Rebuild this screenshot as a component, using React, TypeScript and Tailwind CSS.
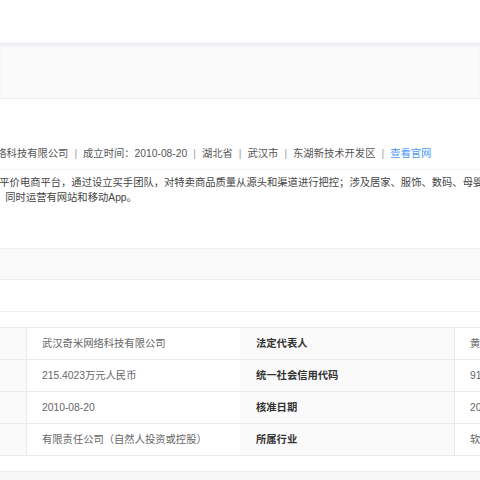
export default function App() {
  const rows = [
    ['武汉奇米网络科技有限公司', '法定代表人', '黄'],
    ['215.4023万元人民币', '统一社会信用代码', '91'],
    ['2010-08-20', '核准日期', '20'],
    ['有限责任公司（自然人投资或控股）', '所属行业', '软'],
  ];

  const font = { fontFamily: '"Liberation Sans", "Noto Sans CJK SC", sans-serif' };

  return (
    <div className="w-[480px] h-[480px] overflow-hidden bg-white flex flex-col text-[10.3px]" style={font}>
      {/* top bar */}
      <div className="h-[43px] shrink-0" />
      <div className="h-[56px] shrink-0 bg-[#fafafa] border-t border-[#ebebf1] border-b border-b-[#ececec] shadow-[inset_0_2px_3px_rgba(230,230,240,0.6)]" />

      {/* company info */}
      <div className="h-[149px] shrink-0 overflow-hidden">
        <div className="pt-[47px] pb-[7px] border-b border-[#f2f2f2] leading-[16px] whitespace-nowrap text-[#555] -ml-[14px] flex items-center">
          <span>网络科技有限公司</span>
          <span className="mx-[6px] text-[#999]">|</span>
          <span>成立时间：2010-08-20</span>
          <span className="mx-[6px] text-[#999]">|</span>
          <span>湖北省</span>
          <span className="mx-[6px] text-[#999]">|</span>
          <span>武汉市</span>
          <span className="mx-[6px] text-[#999]">|</span>
          <span>东湖新技术开发区</span>
          <span className="mx-[6px] text-[#999]">|</span>
          <span className="text-[#4b9bf5]">查看官网</span>
        </div>
        <div className="pt-[5px] leading-[15px] text-[#444] whitespace-nowrap">
          <div className="-ml-[11px]">家平价电商平台，通过设立买手团队，对特卖商品质量从源头和渠道进行把控；涉及居家、服饰、数码、母婴</div>
          <div className="-ml-[5px]">，同时运营有网站和移动App。</div>
        </div>
      </div>

      {/* tabs */}
      <div className="h-[32px] shrink-0 bg-[#fafafa] border-t border-[#f0f0f0] border-b border-b-[#efefef]" />
      <div className="h-[32px] shrink-0 border-b border-[#efefef]" />
      <div className="h-[15px] shrink-0" />

      {/* table */}
      <div className="shrink-0 border-t border-[#ebebeb] grid grid-cols-[27px_213px_215px_1fr]">
        {rows.map((r, i) => (
          <div key={i} className="contents">
            <div className="h-[32px] bg-[#fafafa] border-b border-r border-[#ebebeb]" />
            <div className="h-[32px] flex items-center pl-[15px] text-[#666] border-b border-[#ebebeb] whitespace-nowrap">{r[0]}</div>
            <div className="h-[32px] flex items-center pl-[16px] font-bold text-[#333] bg-[#fafafa] border-b border-r border-[#ebebeb] whitespace-nowrap">{r[1]}</div>
            <div className="h-[32px] flex items-center pl-[15px] text-[#666] border-b border-[#ebebeb] whitespace-nowrap overflow-hidden">{r[2]}</div>
          </div>
        ))}
      </div>

      <div className="h-[15px] shrink-0" />
      <div className="flex-1 bg-[#f7f7f7] border-t border-[#eeeeee]" />
    </div>
  );
}
